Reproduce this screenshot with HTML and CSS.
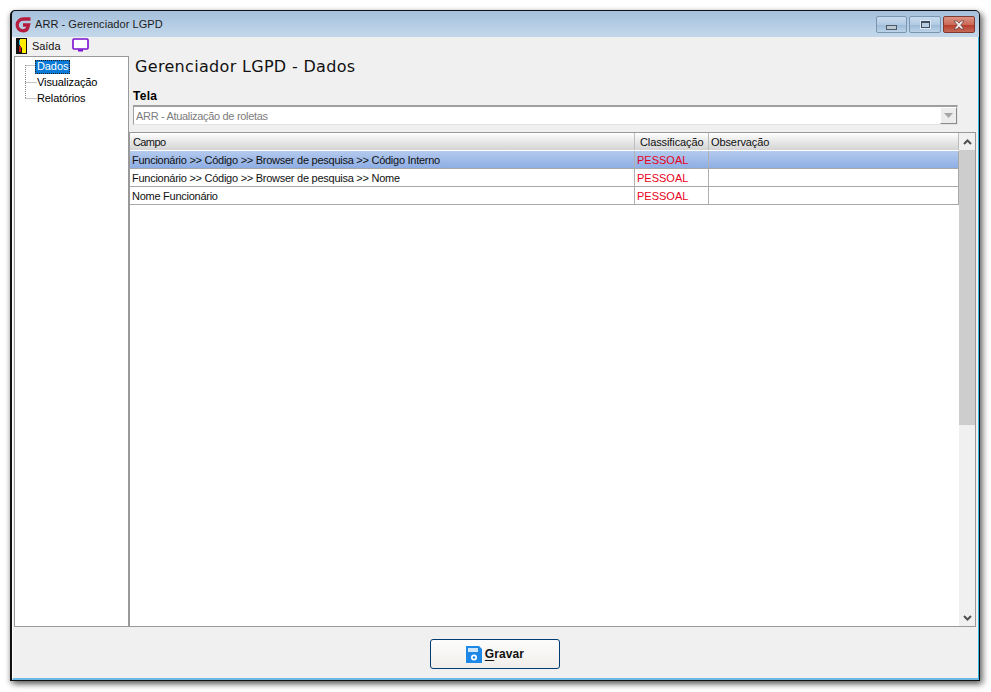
FILE: index.html
```html
<!DOCTYPE html>
<html lang="pt">
<head>
<meta charset="utf-8">
<title>ARR - Gerenciador LGPD</title>
<link rel="stylesheet" href="styles.css">
</head>
<body>
<div class="window">
  <header class="titlebar">
    <svg class="logo" width="17" height="17" viewBox="0 0 17 17"><path d="M15.500 3H8.500C4.800 3 2.500 5.500 2.200 8.500C1.900 12 4.300 14.800 7.800 14.800C10.500 14.800 12.200 13.800 12.800 11.500L13.500 9H8" fill="none" stroke="#b51c3e" stroke-width="3.300"/></svg>
    <span class="title-text">ARR - Gerenciador LGPD</span>
    <div class="controls">
      <div class="ctl ctl-min"><i class="glyph-min"></i></div>
      <div class="ctl ctl-max"><i class="glyph-max"></i></div>
      <div class="ctl ctl-close"><svg width="14" height="10" viewBox="0 0 14 10"><path d="M2 1H5L7 3.200L9 1H12L8.700 5L12 9H9L7 6.800L5 9H2L5.300 5Z" fill="#f4f0f0" stroke="#5a3a3a" stroke-width=".7"/></svg></div>
    </div>
  </header>
  <div class="client">
    <nav class="menubar">
      <svg class="exit-icon" width="11" height="16" viewBox="0 0 11 16"><rect width="11" height="16" fill="#111"/><rect x="2" y="1" width="8" height="14" fill="#ffec00"/><path d="M2 1H4V8L6 10V15H2Z" fill="#111"/><path d="M3 2H4V7H3Z" fill="#22b8d8"/><path d="M3 8H5V14H3Z" fill="#c01818"/></svg>
      <span class="menu-label">Saída</span>
      <svg class="screen-icon" width="17" height="15" viewBox="0 0 17 15"><rect x="1" y="1" width="15" height="10" rx="1" fill="#fff" stroke="#7a10d0" stroke-width="1.600"/><rect x="6" y="11.500" width="5" height="2" fill="#7a10d0"/></svg>
    </nav>
    <div class="main">
      <aside class="tree">
        <svg class="tree-lines" width="12" height="34" viewBox="0 0 12 34"><path d="M.5 0V34M.5 .5H10M.5 17.500H12M.5 33.500H12" stroke="#888" stroke-dasharray="1 1" fill="none"/></svg>
        <ul class="tree-list">
          <li><span class="tree-selected">Dados</span></li>
          <li><span class="tree-item">Visualização</span></li>
          <li><span class="tree-item">Relatórios</span></li>
        </ul>
      </aside>
      <section class="content">
        <div class="form-head">
          <h1 class="heading">Gerenciador LGPD - Dados</h1>
          <label class="field-label">Tela</label>
          <div class="combo">
            <span class="combo-text">ARR - Atualização de roletas</span>
            <div class="combo-btn"><svg width="9" height="5" viewBox="0 0 9 5"><path d="M0 0H9L4.500 5Z" fill="#a6a6a6"/></svg></div>
          </div>
        </div>
        <div class="grid">
          <div class="grid-body">
            <div class="row row-head">
              <div class="cell c1 head-campo">Campo</div>
              <div class="cell c2 center">Classificação</div>
              <div class="cell c3">Observação</div>
            </div>
            <div class="row row-sel">
              <div class="cell c1">Funcionário &gt;&gt; Código &gt;&gt; Browser de pesquisa &gt;&gt; Código Interno</div>
              <div class="cell c2 red">PESSOAL</div>
              <div class="cell c3"></div>
            </div>
            <div class="row">
              <div class="cell c1">Funcionário &gt;&gt; Código &gt;&gt; Browser de pesquisa &gt;&gt; Nome</div>
              <div class="cell c2 red">PESSOAL</div>
              <div class="cell c3"></div>
            </div>
            <div class="row">
              <div class="cell c1">Nome Funcionário</div>
              <div class="cell c2 red">PESSOAL</div>
              <div class="cell c3"></div>
            </div>
          </div>
          <div class="scrollbar">
            <div class="sb-btn"><svg width="9" height="6" viewBox="0 0 9 6"><path d="M1 5L4.500 1.500L8 5" fill="none" stroke="#505050" stroke-width="2"/></svg></div>
            <div class="sb-thumb"></div>
            <div class="sb-track"></div>
            <div class="sb-btn"><svg width="9" height="6" viewBox="0 0 9 6"><path d="M1 1L4.500 4.500L8 1" fill="none" stroke="#505050" stroke-width="2"/></svg></div>
          </div>
        </div>
      </section>
    </div>
    <footer class="footer">
      <button class="save-btn" type="button">
        <svg width="16" height="17" viewBox="0 0 16 17"><path d="M0 0H13L16 3V17H0Z" fill="#1e88e8"/><rect x="2" y="2" width="10" height="4" fill="#cfe6fa"/><circle cx="8" cy="11.500" r="3" fill="#fff"/><circle cx="8" cy="11.500" r="1.300" fill="#1e88e8"/></svg>
        <span class="save-label"><u>G</u>ravar</span>
      </button>
    </footer>
  </div>
</div>
</body>
</html>
```

FILE: styles.css
```css
* { box-sizing: border-box; }
html, body { margin: 0; padding: 0; background: #fff; }
body { width: 991px; height: 692px; overflow: hidden; font-family: "Liberation Sans", Arial, sans-serif; font-size: 11px; color: #000; }
.window {
  margin: 10px 0 0 10px;
  width: 970px;
  height: 671px;
  border: 1px solid #111;
  border-left-width: 2px;
  border-radius: 5px 5px 0 0;
  background: linear-gradient(#a5c0dc, #c3d8ea 26px);
  box-shadow: 3px 3px 6px rgba(0,0,0,.55), -1px 2px 5px rgba(0,0,0,.22);
  display: flex;
  flex-direction: column;
}
.titlebar { height: 26px; display: flex; align-items: center; padding-left: 3px; flex: none; }
.logo { flex: none; }
.title-text { margin-left: 3px; font-size: 11px; color: #1c1c1c; letter-spacing: .05px; }
.controls { margin-left: auto; display: flex; gap: 2px; align-self: flex-start; margin-top: 5px; margin-right: 4px; }
.ctl { height: 17px; border: 1px solid #7c95b2; border-radius: 2px; display: flex; align-items: center; justify-content: center; background: linear-gradient(#c8dbee 0, #b2cbe3 50%, #9ab8d6 51%, #bcd3e8 100%); }
.ctl-min { width: 31px; }
.ctl-max { width: 32px; }
.ctl-close { width: 32px; background: linear-gradient(#dd9484 0, #cc6a58 50%, #b83a28 51%, #c56a58 100%); border-color: #7e3a30; }
.glyph-min { width: 11px; height: 5px; margin-top: 5px; background: #bcc6cf; border: 1px solid #4b5966; display: block; }
.glyph-max { width: 9px; height: 7px; background: #b8cde2; border: 1px solid #3f4d5c; border-top-width: 2px; box-shadow: 0 0 0 1px #dfe9f3; display: block; }
.client { flex: 1; min-height: 0; display: flex; flex-direction: column; background: #f0f0f0; border-style: solid; border-color: #fff #34b8ea #6cb8e4 #fff; border-width: 0 1px 2px 1px; padding: 0 2px 0 1px; }
.menubar { height: 19px; flex: none; display: flex; align-items: center; padding: 0 0 2px 2px; }
.exit-icon { flex: none; }
.menu-label { margin-left: 5px; color: #111; letter-spacing: -.05px; }
.screen-icon { margin-left: 11px; flex: none; }
.main { flex: 1; min-height: 0; display: flex; }
.tree { width: 115px; border: 1px solid #999; background: #fff; position: relative; flex: none; }
.tree-lines { position: absolute; left: 10px; top: 8px; }
.tree-list { list-style: none; margin: 0; padding: 1px 0 0 20px; }
.tree-list li { height: 16px; line-height: 16px; display: flex; align-items: center; letter-spacing: -.1px; }
.tree-selected { display: block; height: 14px; line-height: 12px; padding: 0 2px; margin-top: 2px; background: #0a7ad6; color: #fff; outline: 1px dotted #222; outline-offset: -1px; }
.tree-item { padding-left: 2px; }
.content { flex: 1; min-width: 0; display: flex; flex-direction: column; }
.form-head { height: 76px; flex: none; padding: 0 0 0 4px; }
.heading { margin: 0 0 0 2px; font-family: "DejaVu Sans", sans-serif; font-weight: 400; font-size: 16px; line-height: 20px; height: 33px; padding-top: 1px; letter-spacing: .32px; color: #111; }
.field-label { display: block; font-weight: 700; font-size: 12px; line-height: 14px; letter-spacing: .3px; }
.combo { margin: 2px 0 0 0; width: 825px; height: 20px; display: flex; align-items: center; background: #fff; border-style: solid; border-width: 2px 1px 1px 1px; border-color: #9f9f9f #e4e4e4 #e4e4e4 #9f9f9f; padding-left: 2px; }
.combo-text { color: #7d7d7d; letter-spacing: -.32px; }
.combo-btn { margin-left: auto; width: 17px; height: 17px; background: #ececec; border: 1px solid #fff; border-right-color: #8a8a8a; border-bottom-color: #8a8a8a; display: flex; align-items: center; justify-content: center; }
.grid { flex: 1; min-height: 0; display: flex; background: #fff; border: 1px solid #999; }
.grid-body { flex: 1; min-width: 0; }
.row { height: 18px; display: flex; border-bottom: 1px solid #a8a8a8; background: #fff; }
.row-head { background: linear-gradient(#fff, #ececec 40%, #d4d4d4); border-bottom: 1px solid #fff; }
.row-sel { background: linear-gradient(#b4caee, #8eaee4); }
.cell { padding: 0 0 0 2px; line-height: 19px; white-space: nowrap; overflow: hidden; border-right: 1px solid #b0b0b0; color: #111; letter-spacing: -.26px; }
.row-head .cell { border-right: 1px solid #bdbdbd; letter-spacing: -.1px; }
.row-head .head-campo { letter-spacing: -.6px; padding-left: 3px; }
.c1 { width: 505px; flex: none; }
.c2 { width: 74px; flex: none; }
.c3 { flex: 1; border-right: 1px solid #a8a8a8; letter-spacing: 0; }
.row-head .center { padding-left: 5px; }
.cell.red { color: #e8001c; letter-spacing: 0; }
.scrollbar { width: 16px; flex: none; display: flex; flex-direction: column; background: #f0f0f0; }
.sb-btn { height: 17px; flex: none; display: flex; align-items: center; justify-content: center; }
.sb-thumb { height: 275px; flex: none; background: #cdcdcd; }
.sb-track { flex: 1; }
.footer { height: 51px; flex: none; display: flex; justify-content: center; padding-top: 12px; }
.save-btn { width: 130px; height: 30px; border: 1px solid #003c74; border-radius: 3px; background: linear-gradient(#fdfdfd, #f0eeea); display: flex; align-items: center; justify-content: center; gap: 3px; padding: 0; font-family: "Liberation Sans", Arial, sans-serif; font-size: 12px; font-weight: 700; color: #111; letter-spacing: .1px; }
.save-label u { text-underline-offset: 2px; }
```
